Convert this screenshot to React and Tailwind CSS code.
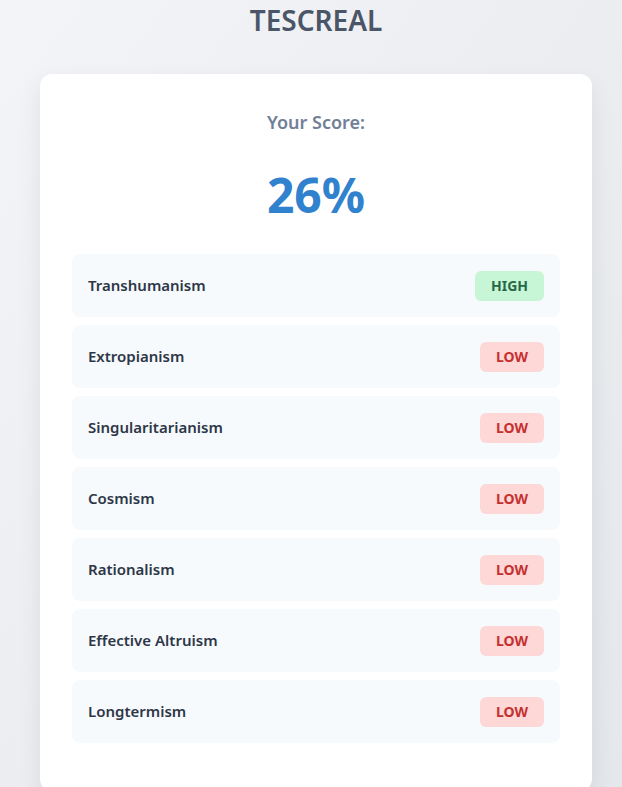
import React from 'react';

const results = [
	{ name: 'Transhumanism', level: 'HIGH' },
	{ name: 'Extropianism', level: 'LOW' },
	{ name: 'Singularitarianism', level: 'LOW' },
	{ name: 'Cosmism', level: 'LOW' },
	{ name: 'Rationalism', level: 'LOW' },
	{ name: 'Effective Altruism', level: 'LOW' },
	{ name: 'Longtermism', level: 'LOW' }
];

const Badge = ({ level }) => {
	const high = level === 'HIGH';
	return (
		<span
			className={
				high
					? 'px-4 py-[5px] rounded-md text-sm font-bold bg-[#c6f6d5] text-[#276749]'
					: 'px-4 py-[5px] rounded-md text-sm font-bold bg-[#fed7d7] text-[#c53030]'
			}
		>
			{level}
		</span>
	);
};

export default function App() {
	return (
		<div
			className="min-h-screen bg-gradient-to-br from-[#f3f4f7] to-[#e4e7eb] pl-10"
			style={{ fontFamily: '"Noto Sans", "Open Sans", sans-serif' }}
		>
			<h1 className="w-[552px] text-center text-[28px] font-semibold text-[#4a5568] leading-[40px] mb-[34px]">
				TESCREAL
			</h1>
			<div className="w-[552px] bg-white rounded-xl shadow-[0_10px_25px_rgba(0,0,0,0.08)] px-8 pt-[36px] pb-12">
				<h2 className="text-center text-lg font-semibold text-[#718096] leading-6">
					Your Score:
				</h2>
				<div className="text-center text-5xl font-bold text-[#3182ce] leading-none mt-[37px] mb-[35px]">
					26%
				</div>
				<div className="flex flex-col gap-2">
					{results.map(r => (
						<div
							key={r.name}
							className="flex items-center justify-between bg-[#f7fafc] rounded-lg px-4 h-[63px]"
						>
							<span className="text-[15px] font-semibold text-[#2d3748]">
								{r.name}
							</span>
							<Badge level={r.level} />
						</div>
					))}
				</div>
			</div>
		</div>
	);
}
